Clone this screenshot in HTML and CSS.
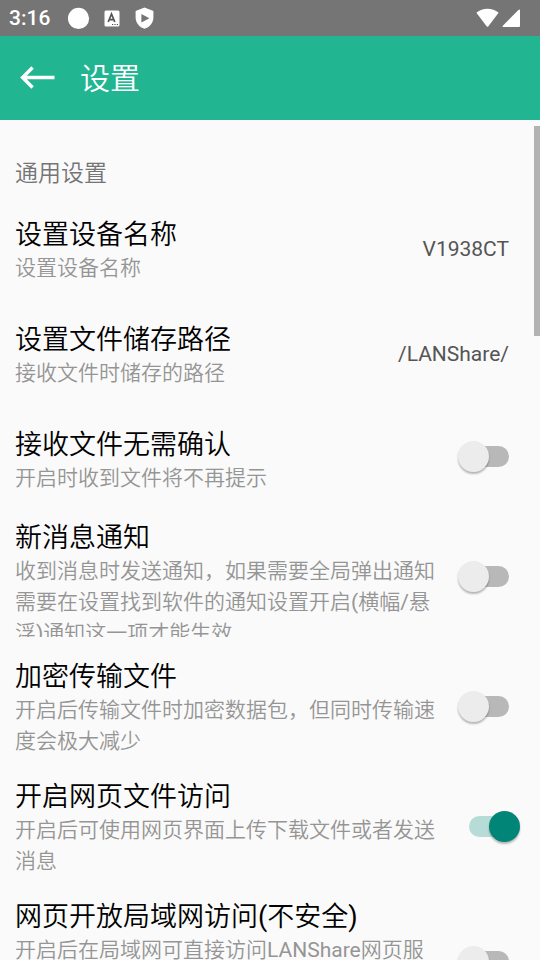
FILE: index.html
```html
<!DOCTYPE html>
<html lang="zh-CN">
<head>
<meta charset="utf-8">
<meta name="viewport" content="width=device-width, initial-scale=1">
<title>设置</title>
<link rel="stylesheet" href="styles.css">
</head>
<body>
<div class="screen">
  <div class="status">
    <span class="clock">3:16</span>
    <svg class="dot" width="22" height="22" viewBox="0 0 22 22"><circle cx="10.5" cy="11.4" r="10.6" fill="#fff"/></svg>
    <svg class="note" width="16" height="17" viewBox="0 0 16 17"><rect x="0.5" y="0.5" width="15" height="16" rx="1.5" fill="#fff"/><path d="M4.2 12 7.5 4 10.8 12M5.3 9.6h4.4" fill="none" stroke="#555" stroke-width="1.7"/><path d="M8 14.5h1.2M10.4 14.5h1.2M12.8 14.5h1.2" stroke="#555" stroke-width="1.2"/></svg>
    <svg width="19" height="22" viewBox="0 0 19 22"><path d="M9.5 0.6 18.4 4V10.3C18.4 15.9 14.6 20.5 9.5 21.8 4.4 20.5 0.6 15.9 0.6 10.3V4Z" fill="#fff"/><path d="M6.4 7v8.4l8-4.2z" fill="#757575"/></svg>
    <svg class="wifi" width="23" height="20" viewBox="0 0 23 20"><path d="M0.4 4.7C6.5-0.5 16.5-0.5 22.6 4.7L12.2 18.4Q11.5 19.2 10.8 18.4Z" fill="#fff"/></svg>
    <svg width="19" height="19" viewBox="0 0 19 19"><path d="M18 1.3V17Q18 18 17 18H1.3Q-.1 18 .8 16.8L16.4 1Q18 0 18 1.3Z" fill="#fff"/></svg>
  </div>
  <header class="toolbar">
    <button class="back" type="button" aria-label="返回"><svg width="36" height="24" viewBox="0 0 36 24"><path d="M34.5 11.5H3M12.6 1.5 2.6 11.5l10 10" fill="none" stroke="#fff" stroke-width="3.4"/></svg></button>
    <h1>设置</h1>
  </header>
  <main class="content">
    <h2>通用设置</h2>
    <a class="row" href="#name">
      <span class="copy"><span class="title">设置设备名称</span><span class="desc">设置设备名称</span></span>
      <span class="value">V1938CT</span>
    </a>
    <a class="row" href="#path">
      <span class="copy"><span class="title">设置文件储存路径</span><span class="desc">接收文件时储存的路径</span></span>
      <span class="value">/LANShare/</span>
    </a>
    <label class="row toggle single">
      <span class="copy"><span class="title">接收文件无需确认</span><span class="desc">开启时收到文件将不再提示</span></span>
      <input class="switch" type="checkbox">
    </label>
    <label class="row toggle">
      <span class="copy"><span class="title">新消息通知</span><span class="desc clipped">收到消息时发送通知，如果需要全局弹出通知需要在设置找到软件的通知设置开启<span class="latin">(</span>横幅<span class="latin">/</span>悬浮<span class="latin">)</span>通知这一项才能生效</span></span>
      <input class="switch" type="checkbox">
    </label>
    <label class="row toggle">
      <span class="copy"><span class="title">加密传输文件</span><span class="desc">开启后传输文件时加密数据包，但同时传输速度会极大减少</span></span>
      <input class="switch" type="checkbox">
    </label>
    <label class="row toggle">
      <span class="copy"><span class="title">开启网页文件访问</span><span class="desc">开启后可使用网页界面上传下载文件或者发送消息</span></span>
      <input class="switch" type="checkbox" checked>
    </label>
    <label class="row toggle tall">
      <span class="copy"><span class="title">网页开放局域网访问<span class="latin">(</span>不安全<span class="latin">)</span></span><span class="desc">开启后在局域网可直接访问<span class="latin">LANShare</span>网页服</span></span>
      <input class="switch" type="checkbox">
    </label>
    <div class="scrollbar"></div>
  </main>
</div>
</body>
</html>
```
FILE: styles.css
```css
* {
  box-sizing: border-box;
}

body {
  margin: 0;
  background: #fafafa;
  color: #000;
  font-family: Roboto, "Noto Sans CJK SC DemiLight", "Noto Sans CJK SC", sans-serif;
  font-weight: 350;
}

.screen {
  display: flex;
  flex-direction: column;
  height: 100vh;
  overflow: hidden;
}

svg {
  display: block;
  flex: none;
}

.status {
  display: flex;
  flex: none;
  align-items: center;
  height: 36px;
  padding: 0 19px 0 9px;
  background: #757575;
  color: #fff;
}

.clock {
  padding-top: 1px;
  font-size: 21px;
  font-weight: 500;
  line-height: 35px;
}

.dot {
  margin-left: 18px;
}

.note {
  margin: 0 15px 0 14px;
}

.wifi {
  margin: 0 3px 0 auto;
}

.toolbar {
  display: flex;
  flex: none;
  align-items: center;
  gap: 24px;
  height: 84px;
  padding: 0 20px;
  background: #22b591;
  color: #fff;
}

.back {
  padding: 0;
  border: 0;
  background: none;
}

h1 {
  margin: 0;
  padding-top: 2px;
  font-size: 30px;
  font-weight: 350;
  line-height: 40px;
}

.content {
  position: relative;
  flex: 1;
  min-height: 0;
  overflow: hidden;
}

h2 {
  margin: 0;
  padding: 37px 15px 6px;
  color: #757575;
  font-size: 23px;
  font-weight: 350;
  line-height: 34px;
}

.row {
  display: flex;
  align-items: center;
  gap: 15px;
  padding: 0 31px 0 15px;
  color: inherit;
  text-decoration: none;
}

.copy {
  flex: 1;
  padding: 20px 0 18px;
}

.title,
.desc {
  display: block;
}

.title {
  font-size: 27px;
  line-height: 36px;
}

.desc {
  color: #959595;
  font-size: 21px;
  line-height: 31px;
}

.latin {
  font-weight: 400;
}

.value {
  color: #555;
  font-size: 21px;
  font-weight: 400;
  line-height: 31px;
}

.toggle {
  margin-bottom: 2px;
  padding-right: 20px;
}

.toggle .copy {
  padding: 12px 0 8px;
}

.single .copy {
  padding: 20px 0 12px;
}

.clipped {
  height: 81px;
  overflow: hidden;
}

.tall {
  min-height: 148px;
  align-items: stretch;
}

.tall .switch {
  align-self: center;
}

.switch {
  position: relative;
  flex: none;
  width: 62px;
  height: 31px;
  margin: 0;
  appearance: none;
}

.switch::before {
  position: absolute;
  inset: 5px 11px;
  border-radius: 11px;
  background: #b8b8b8;
  content: "";
}

.switch::after {
  position: absolute;
  top: 0;
  left: 0;
  width: 31px;
  height: 31px;
  border-radius: 50%;
  background: #ececec;
  box-shadow: 0 2px 2px rgba(0, 0, 0, 0.28);
  content: "";
}

.switch:checked::before {
  background: #b7dcd7;
}

.switch:checked::after {
  right: 0;
  left: auto;
  background: #008577;
}

.scrollbar {
  position: absolute;
  top: 6px;
  right: 0;
  width: 6px;
  height: 210px;
  background: #b3b3b3;
}
```
